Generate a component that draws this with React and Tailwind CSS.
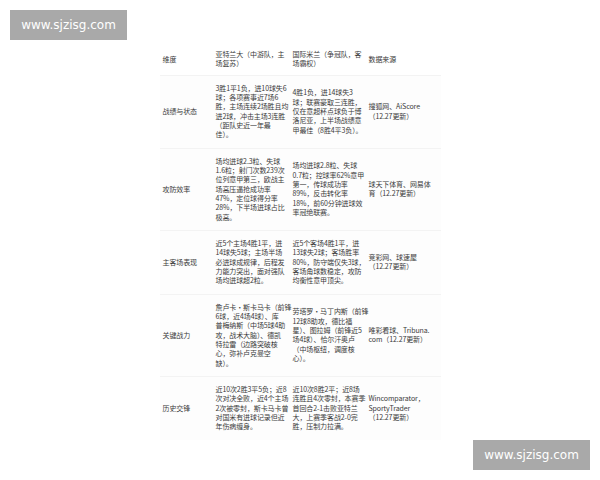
const rows = [
  {
    label: "战绩与状态",
    a: ["3胜1平1负，进10球失6", "球；各项赛事近7场6", "胜，主场连续2场胜且均", "进2球，冲击主场3连胜", "（距队史近一年最", "佳）。"],
    b: ["4胜1负，进14球失3", "球；联赛豪取三连胜，", "仅在意超杯点球负于博", "洛尼亚，上半场战绩意", "甲最佳（8胜4平3负）。"],
    src: ["搜狐网、AiScore", "（12.27更新）"],
  },
  {
    label: "攻防效率",
    a: ["场均进球2.3粒、失球", "1.6粒；射门次数239次", "位列意甲第三，欧战主", "场高压逼抢成功率", "47%，定位球得分率", "28%，下半场进球占比", "极高。"],
    b: ["场均进球2.8粒、失球", "0.7粒；控球率62%意甲", "第一，传球成功率", "89%，反击转化率", "18%，前60分钟进球效", "率冠绝联赛。"],
    src: ["球天下体育、网易体", "育（12.27更新）"],
  },
  {
    label: "主客场表现",
    a: ["近5个主场4胜1平，进", "14球失5球；主场半场", "必进球成规律，后程发", "力能力突出，面对强队", "场均进球超2粒。"],
    b: ["近5个客场4胜1平，进", "13球失2球；客场胜率", "80%，防守端仅失3球，", "客场角球数稳定，攻防", "均衡性意甲顶尖。"],
    src: ["竞彩网、球速屋", "（12.27更新）"],
  },
  {
    label: "关键战力",
    a: ["詹卢卡·斯卡马卡（前锋", "6球，近4场4球）、库", "普梅纳斯（中场5球4助", "攻，战术大脑）、德凯", "特拉雷（边路突破核", "心，弥补卢克曼空", "缺）。"],
    b: ["劳塔罗·马丁内斯（前锋", "12球8助攻，德比福", "星）、图拉姆（前锋近5", "场4球）、恰尔汗奥卢", "（中场枢纽，调度核", "心）。"],
    src: ["唯彩看球、Tribuna.", "com（12.27更新）"],
  },
  {
    label: "历史交锋",
    a: ["近10次2胜3平5负；近8", "次对决全败，近4个主场", "2次被零封，斯卡马卡曾", "对国米有进球记录但近", "年伤病缠身。"],
    b: ["近10次8胜2平；近8场", "连胜且4次零封，本赛季", "首回合2-1击败亚特兰", "大，上赛季客战2-0完", "胜，压制力拉满。"],
    src: ["Wincomparator，", "SportyTrader", "（12.27更新）"],
  },
];

function Lines({ lines }) {
  return (
    <div className="flex flex-col">
      {lines.map((l, i) => (
        <span key={i} className="whitespace-nowrap">
          {l}
        </span>
      ))}
    </div>
  );
}

function Watermark({ className }) {
  return (
    <div
      className={
        "absolute flex h-[30px] w-[117px] items-center justify-center bg-[#a9a9a9] text-[12px] text-white " +
        className
      }
      style={{ fontFamily: '"DejaVu Sans", sans-serif' }}
    >
      www.sjzisg.com
    </div>
  );
}

export default function App() {
  return (
    <div className="relative h-[480px] w-[600px] overflow-hidden bg-white">
      <div className="pt-[44px]">
        <div
          className="mx-auto w-[281px] text-[7px] leading-[9.33px] tracking-[-0.1px] text-[#3a3a3a]"
          style={{ fontFamily: '"Noto Sans CJK SC", sans-serif' }}
        >
          <div className="grid grid-cols-[53px_77px_76px_75px] items-center py-[6px]">
            <div className="pl-[3px]">维度</div>
            <div className="pl-[3px]">
              <Lines lines={["亚特兰大（中游队，主", "场复苏）"]} />
            </div>
            <div className="pl-[3px]">
              <Lines lines={["国际米兰（争冠队，客", "场霸权）"]} />
            </div>
            <div className="pl-[3px]">数据来源</div>
          </div>
          {rows.map((r, i) => (
            <div
              key={i}
              className="grid grid-cols-[53px_77px_76px_75px] items-center border-t border-[#f3f3f3] bg-[#fdfdfd] py-[8px]"
            >
              <div className="pl-[3px]">{r.label}</div>
              <div className="pl-[3px]">
                <Lines lines={r.a} />
              </div>
              <div className="pl-[3px]">
                <Lines lines={r.b} />
              </div>
              <div className="pl-[3px]">
                <Lines lines={r.src} />
              </div>
            </div>
          ))}
        </div>
      </div>
      <Watermark className="left-[10px] top-[10px]" />
      <Watermark className="left-[473px] top-[440px]" />
    </div>
  );
}
